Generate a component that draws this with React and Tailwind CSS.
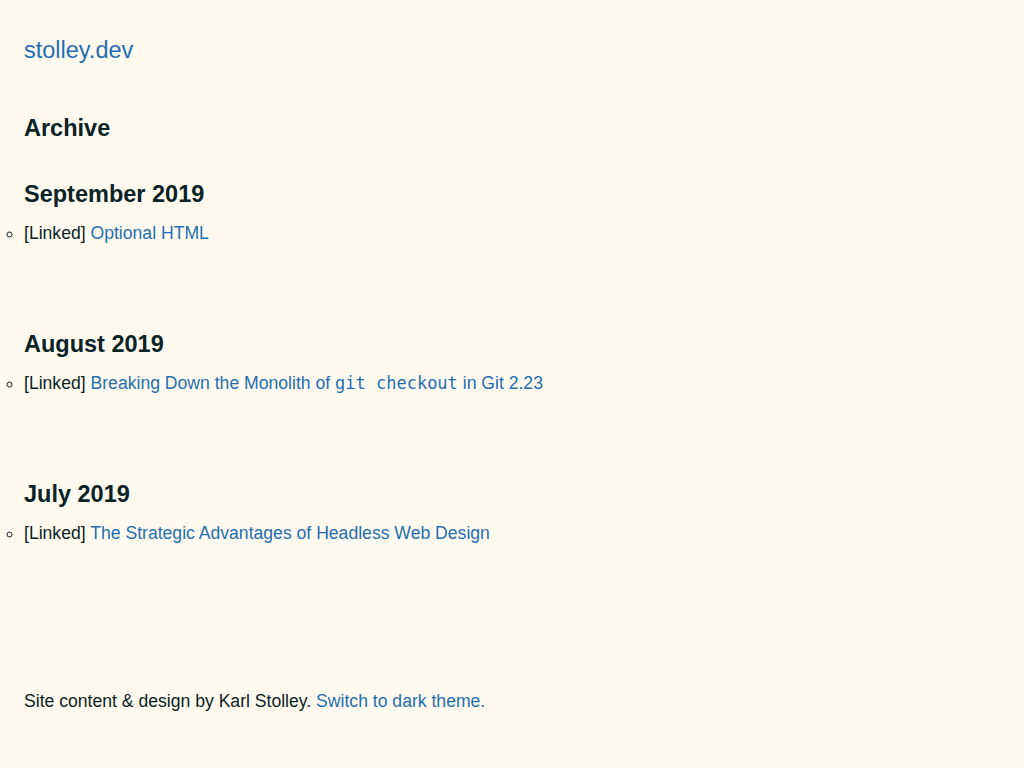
import React from 'react';

const MONTHS = [
  {
    title: 'September 2019',
    items: [{ label: 'Optional HTML' }],
  },
  {
    title: 'August 2019',
    items: [
      {
        label: (
          <>
            Breaking Down the Monolith of{' '}
            <code className="font-['DejaVu_Sans_Mono',monospace] text-[17px]">git checkout</code> in Git 2.23
          </>
        ),
      },
    ],
  },
  {
    title: 'July 2019',
    items: [{ label: 'The Strategic Advantages of Headless Web Design' }],
  },
];

export default function App() {
  return (
    <div className="min-h-[768px] bg-[#fffaef] text-[#0b2226] font-['Liberation_Sans',Arial,sans-serif] px-6 pt-[34px]">
      {/* Site name */}
      <header>
        <a href="#" className="block text-[23.5px] leading-[32px] text-[#1f6fb0]">
          stolley.dev
        </a>
      </header>

      <main className="mt-[48px]">
        <h1 className="text-[23.5px] leading-[28px] font-bold">Archive</h1>

        {MONTHS.map((m, i) => (
          <section key={m.title} className={i === 0 ? 'mt-[38px]' : 'mt-[83px]'}>
            <h2 className="text-[23.5px] leading-[28px] font-bold">{m.title}</h2>
            <ul className="mt-[11px] list-[circle] list-outside pl-0">
              {m.items.map((it, j) => (
                <li key={j} className="text-[17.6px] leading-[28px]">
                  [Linked]{' '}
                  <a href="#" className="text-[#1f6fb0]">
                    {it.label}
                  </a>
                </li>
              ))}
            </ul>
          </section>
        ))}
      </main>

      <footer className="mt-[140px] text-[17.6px] leading-[28px]">
        Site content &amp; design by Karl Stolley.{' '}
        <a href="#" className="text-[#1f6fb0]">
          Switch to dark theme.
        </a>
      </footer>
    </div>
  );
}
